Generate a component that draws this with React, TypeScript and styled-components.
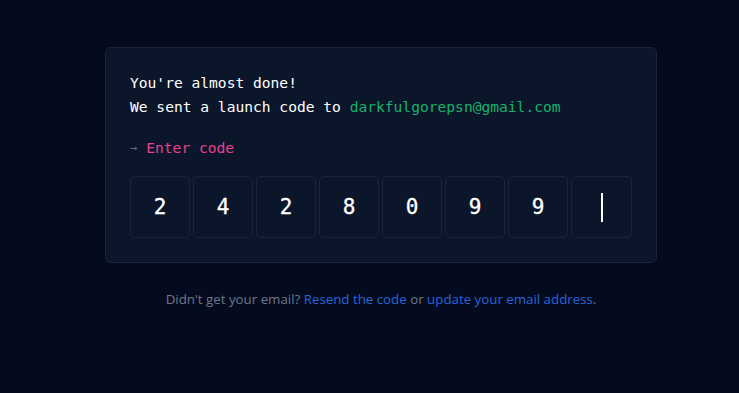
import React from "react";
import styled, { createGlobalStyle } from "styled-components";

const Global = createGlobalStyle`
  html, body { margin: 0; padding: 0; background: #040b1e; }
  body { min-height: 393px; }
`;

const Page = styled.div`
  display: flex;
  flex-direction: column;
  align-items: center;
  width: 552px;
  margin-left: 105px;
  padding-top: 47px;
`;

const Card = styled.div`
  box-sizing: border-box;
  width: 552px;
  background: #0c162b;
  border: 1px solid #1b2539;
  border-radius: 6px;
  padding: 23px 23px 24px 24px;
  font-family: "DejaVu Sans Mono", monospace;
  font-size: 14.6px;
  color: #ffffff;
`;

const Line = styled.div`
  line-height: 24px;
  white-space: nowrap;
`;

const Email = styled.span`
  color: #16b36a;
`;

const Prompt = styled.div`
  margin-top: 17px;
  line-height: 24px;
  display: flex;
  gap: 9px;
  align-items: center;
`;

const Arrow = styled.span`
  color: #5d6b86;
  font-size: 12px;
`;

const PromptText = styled.span`
  color: #e8408f;
`;

const Boxes = styled.div`
  margin-top: 16px;
  display: grid;
  grid-template-columns: repeat(7, 60px) 61px;
  gap: 3px;
`;

const Box = styled.div`
  box-sizing: border-box;
  height: 62px;
  border: 1px solid #1b2539;
  border-radius: 5px;
  display: flex;
  align-items: center;
  justify-content: center;
  font-family: "DejaVu Sans Mono", monospace;
  font-size: 21px;
  color: #ffffff;
  -webkit-text-stroke: 0.3px #ffffff;
`;

const Caret = styled.span`
  display: block;
  width: 2px;
  height: 29px;
  background: #ffffff;
`;

const Footer = styled.p`
  margin: 26px 0 0;
  font-family: "Open Sans", sans-serif;
  font-size: 13.3px;
  line-height: 20px;
  color: #6e778a;
  white-space: nowrap;
`;

const Link = styled.a`
  color: #2a64db;
  text-decoration: none;
`;

const digits = ["2", "4", "2", "8", "0", "9", "9"];

export default function App() {
  return (
    <>
      <Global />
      <Page>
        <Card>
          <Line>You're almost done!</Line>
          <Line>
            We sent a launch code to <Email>darkfulgorepsn@gmail.com</Email>
          </Line>
          <Prompt>
            <Arrow>→</Arrow>
            <PromptText>Enter code</PromptText>
          </Prompt>
          <Boxes>
            {digits.map((d, i) => (
              <Box key={i}>{d}</Box>
            ))}
            <Box>
              <Caret />
            </Box>
          </Boxes>
        </Card>
        <Footer>
          Didn't get your email? <Link href="#">Resend the code</Link> or{" "}
          <Link href="#">update your email address</Link>.
        </Footer>
      </Page>
    </>
  );
}
